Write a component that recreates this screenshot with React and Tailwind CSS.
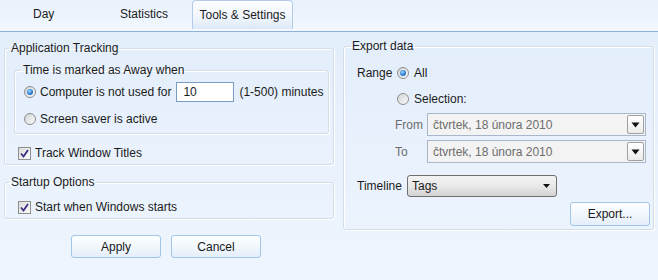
import React from "react";

function Radio({ checked }) {
  return (
    <span className="w-[12px] h-[12px] shrink-0 rounded-full border border-[#8c8e90] bg-linear-to-br from-[#d2d4d6] to-[#fbfbfb] flex items-center justify-center">
      {checked && (
        <span className="w-[6px] h-[6px] rounded-full bg-[radial-gradient(circle_at_40%_35%,#9fd8ff,#2a7fd4_55%,#0b4b98)]" />
      )}
    </span>
  );
}

function Checkbox() {
  return (
    <span className="w-[13px] h-[13px] shrink-0 border border-[#8e8f8f] bg-linear-to-br from-[#dcdcdc] to-[#fdfdfd] flex items-center justify-center">
      <svg width="9" height="9" viewBox="0 0 9 9">
        <path d="M1 4.5 L3.5 7.5 L8 1" fill="none" stroke="#3d2f86" strokeWidth="1.8" />
      </svg>
    </span>
  );
}

function Group({ title, className = "", legendClass = "ml-[4px]", children }) {
  return (
    <fieldset className={`border border-[#d3dde6] rounded-[3px] shadow-[inset_1px_1px_0_#ffffff,1px_1px_0_#ffffff] ${className}`}>
      <legend className={`px-[2px] leading-[16px] ${legendClass}`}>{title}</legend>
      {children}
    </fieldset>
  );
}

function AeroButton({ children, className = "" }) {
  return (
    <button
      type="button"
      className={`h-[23px] rounded-[3px] border border-[#a3c5ea] bg-linear-to-b from-[#fdfeff] via-[#f2f7fd] to-[#e4eefa] text-[#1a1a1a] ${className}`}
    >
      {children}
    </button>
  );
}

function DateCombo() {
  return (
    <div className="w-[219px] h-[23px] border border-[#a9b7cc] bg-[#f3f3f3] flex items-center pl-[5px] pr-[1px] text-[#6d6d6d]">
      <span className="flex-1">čtvrtek, 18 února 2010</span>
      <span className="w-[17px] h-[19px] rounded-[2px] border border-[#a0a0a0] bg-linear-to-b from-[#ffffff] to-[#ececec] flex items-center justify-center">
        <svg width="9" height="6" viewBox="0 0 9 6">
          <path d="M0.5 0.5 H8.5 L4.5 5.5 Z" fill="#111" />
        </svg>
      </span>
    </div>
  );
}

export default function App() {
  return (
    <div
      className="w-[658px] h-[280px] overflow-hidden bg-linear-to-b from-[#e2edfb] to-[#eef5fe] text-[12px] text-[#1b1b1b] flex flex-col"
      style={{ fontFamily: '"Liberation Sans", Arial, sans-serif' }}
    >
      {/* Tab strip */}
      <div className="h-[32px] shrink-0 flex items-start border-b border-[#8eb1dc] bg-linear-to-b from-[#eaf2fc] via-[#edf4fd] to-[#f3f8fe] whitespace-nowrap">
        <div className="w-[86px] h-[28px] pl-[33px] flex items-center">Day</div>
        <div className="w-[106px] h-[28px] pl-[34px] flex items-center">Statistics</div>
        <div className="w-[101px] h-[29px] flex items-center justify-center rounded-t-[4px] border border-b-0 border-[#b3cbe8] bg-linear-to-b from-[#fbfdff] via-[#f3f8fe] to-[#dde9f8]">
          Tools &amp; Settings
        </div>
      </div>

      <div className="flex">
        {/* Left column */}
        <div className="ml-[4px] w-[330px] flex flex-col">
          <Group title="Application Tracking" className="mt-[8px] pb-[3px]">
            <Group title="Time is marked as Away when" className="ml-[9px] mr-[4px] mt-[6px] pb-[4px]" legendClass="ml-[6px]">
              <div className="mt-[4px] h-[20px] pl-[9px] flex items-center">
                <Radio checked />
                <span className="ml-[4px]">Computer is not used for</span>
                <div className="ml-[5px] w-[58px] h-[20px] border border-[#7a9cc8] bg-white pl-[6px] flex items-center">10</div>
                <span className="ml-[5px]">(1-500) minutes</span>
              </div>
              <div className="mt-[7px] h-[20px] pl-[9px] flex items-center">
                <Radio />
                <span className="ml-[4px]">Screen saver is active</span>
              </div>
            </Group>
            <div className="mt-[11px] h-[16px] pl-[13px] flex items-center">
              <Checkbox />
              <span className="ml-[4px]">Track Window Titles</span>
            </div>
          </Group>

          <Group title="Startup Options" className="mt-[9px] pb-[3px]">
            <div className="mt-[9px] h-[16px] pl-[13px] flex items-center">
              <Checkbox />
              <span className="ml-[4px]">Start when Windows starts</span>
            </div>
          </Group>

          <div className="mt-[16px] ml-[67px] flex gap-[10px]">
            <AeroButton className="w-[90px]">Apply</AeroButton>
            <AeroButton className="w-[90px]">Cancel</AeroButton>
          </div>
        </div>

        {/* Right column */}
        <div className="ml-[9px] w-[311px]">
          <Group title="Export data" className="mt-[6px] pb-[3px] pl-[13px]" legendClass="-ml-[7px]">
            <div className="mt-[9px] h-[20px] flex items-center">
              <span className="w-[40px]">Range</span>
              <Radio checked />
              <span className="ml-[5px]">All</span>
            </div>
            <div className="mt-[6px] h-[20px] pl-[40px] flex items-center">
              <Radio />
              <span className="ml-[5px]">Selection:</span>
            </div>
            <div className="mt-[4px] flex items-center pl-[38px]">
              <span className="w-[32px] text-[#6d6d6d]">From</span>
              <DateCombo />
            </div>
            <div className="mt-[4px] flex items-center pl-[38px]">
              <span className="w-[32px] text-[#6d6d6d]">To</span>
              <DateCombo />
            </div>
            <div className="mt-[12px] flex items-center">
              <span className="w-[50px]">Timeline</span>
              <div className="w-[150px] h-[22px] rounded-[3px] border border-[#707070] bg-linear-to-b from-[#f3f3f3] via-[#e9e9e9] to-[#d2d2d2] flex items-center pl-[4px] pr-[6px]">
                <span className="flex-1">Tags</span>
                <svg width="7" height="4" viewBox="0 0 7 4">
                  <path d="M0 0 H7 L3.5 4 Z" fill="#111" />
                </svg>
              </div>
            </div>
            <div className="mt-[5px] flex justify-end pr-[3px]">
              <AeroButton className="w-[80px] h-[24px]">Export...</AeroButton>
            </div>
          </Group>
        </div>
      </div>
    </div>
  );
}
